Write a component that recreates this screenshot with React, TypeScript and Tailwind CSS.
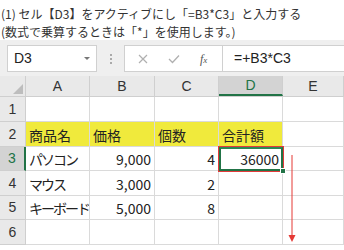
import React from "react";

type Row = {
  n: number;
  h: string;
  yellow?: boolean;
  cells: string[];
};

const cols = ["A", "B", "C", "D", "E"];

// 右寄せする列（数値）
const numCols = [1, 2, 3];

const rows: Row[] = [
  { n: 1, h: "h-[25px]", cells: ["", "", "", "", ""] },
  { n: 2, h: "h-[25px]", yellow: true, cells: ["商品名", "価格", "個数", "合計額", ""] },
  { n: 3, h: "h-[24px]", cells: ["パソコン", "9,000", "4", "36000", ""] },
  { n: 4, h: "h-[25px]", cells: ["マウス", "3,000", "2", "", ""] },
  { n: 5, h: "h-[24px]", cells: ["キーボード", "5,000", "8", "", ""] },
  { n: 6, h: "h-[25px]", cells: ["", "", "", "", ""] },
];

const colW = ["w-[64px]", "w-[65px]", "w-[64px]", "w-[64px]", "flex-1"];

export default function App() {
  return (
    <div className="w-[344px] h-[250px] overflow-hidden bg-white text-[#222] font-['Noto_Sans_CJK_JP','Liberation_Sans',sans-serif] relative">
      {/* 説明文 */}
      <div className="pt-[5px] pl-[1px] text-[12px] leading-[17.5px] h-[40px] text-[#333]">
        <p className="whitespace-nowrap">(1) セル【D3】をアクティブにし「=B3*C3」と入力する</p>
        <p className="whitespace-nowrap">(数式で乗算するときは「*」を使用します。)</p>
      </div>

      {/* 数式バー */}
      <div className="h-[36px] bg-[#efefef] flex items-start pt-[5px] pl-[7px]">
        <div className="w-[90px] h-[27px] bg-white border border-[#d0d0d0] flex items-center justify-between pl-[6px] pr-[6px]">
          <span className="text-[14px] text-[#222] font-['Liberation_Sans',sans-serif]">D3</span>
          <span className="w-0 h-0 border-l-[3px] border-r-[3px] border-t-[3px] border-l-transparent border-r-transparent border-t-[#777]" />
        </div>
        <div className="w-[27px] h-[27px] flex flex-col items-center justify-center gap-[2px]">
          <span className="w-[2px] h-[2px] bg-[#aaa]" />
          <span className="w-[2px] h-[2px] bg-[#aaa]" />
          <span className="w-[2px] h-[2px] bg-[#aaa]" />
        </div>
        <div className="flex-1 h-[27px] bg-white border border-[#d0d0d0] border-r-0 flex items-center">
          <div className="w-[98px] h-full flex items-center border-r border-[#d0d0d0]">
            <svg className="ml-[13px]" width="10" height="10" viewBox="0 0 10 10">
              <path d="M1 1L9 9M9 1L1 9" stroke="#b0b0b0" strokeWidth="1.2" />
            </svg>
            <svg className="ml-[20px]" width="12" height="10" viewBox="0 0 12 10">
              <path d="M1 5L4.5 8.5L11 1.5" stroke="#b0b0b0" strokeWidth="1.3" fill="none" />
            </svg>
            <span className="ml-[20px] text-[12px] italic text-[#555] font-['Liberation_Serif',serif]">
              f<span className="text-[9px]">x</span>
            </span>
          </div>
          <span className="ml-[11px] text-[14px] text-[#222] font-['Liberation_Sans',sans-serif]">=+B3*C3</span>
        </div>
      </div>

      {/* 列見出し */}
      <div className="flex h-[21px] bg-[#e9e9e9] border-b border-[#cfcfcf]">
        <div className="w-[26px] border-r border-[#cfcfcf] flex items-end justify-end pr-[2px] pb-[2px]">
          <svg width="10" height="10" viewBox="0 0 10 10">
            <path d="M10 0V10H0Z" fill="#bdbdbd" />
          </svg>
        </div>
        {cols.map((c, i) => (
          <div
            key={c}
            className={`${colW[i]} flex items-center justify-center text-[14px] font-['Liberation_Sans',sans-serif] ${
              c === "D"
                ? "bg-[#d3d3d3] text-[#217346] border-b-2 border-[#217346] border-r border-r-[#cfcfcf]"
                : "text-[#333] border-r border-[#cfcfcf]"
            }`}
          >
            {c}
          </div>
        ))}
      </div>

      {/* セル */}
      {rows.map((r) => (
        <div key={r.n} className={`flex ${r.h}`}>
          <div
            className={`w-[26px] flex items-end justify-center pb-[1px] text-[14px] font-['Liberation_Sans',sans-serif] border-b border-[#cfcfcf] ${
              r.n === 3
                ? "bg-[#d3d3d3] text-[#217346] border-r-2 border-r-[#217346]"
                : "bg-[#e9e9e9] text-[#333] border-r border-r-[#cfcfcf]"
            }`}
          >
            {r.n}
          </div>
          {r.cells.map((v, i) => (
            <div
              key={i}
              className={`${colW[i]} flex items-end overflow-hidden whitespace-nowrap border-b border-r border-[#dadada] text-[14px] leading-[19px] pb-[1px] ${
                r.yellow && i < 4 ? "bg-[#f0ea3c]" : ""
              } ${numCols.includes(i) && r.n > 2 ? "justify-end pr-[3px]" : "pl-[3px]"} ${
                i === 0 && r.n > 2 ? "tracking-[-2px]" : ""
              }`}
            >
              {v}
            </div>
          ))}
        </div>
      ))}

      {/* 選択セル D3 */}
      <div className="absolute left-[218px] top-[146px] w-[66px] h-[26px] border border-[#e23a3a]">
        <div className="w-full h-full border-2 border-[#217346] border-t-[#2a8a55]" />
        <div className="absolute right-[-3px] bottom-[-3px] w-[6px] h-[6px] bg-[#217346] border border-white" />
      </div>

      {/* 矢印 */}
      <svg className="absolute left-[286px] top-[154px]" width="12" height="90" viewBox="0 0 12 90">
        <path d="M6 1V82" stroke="#e53935" strokeWidth="1" />
        <path d="M2.5 81L6 88L9.5 81Z" fill="#e53935" />
      </svg>
    </div>
  );
}
